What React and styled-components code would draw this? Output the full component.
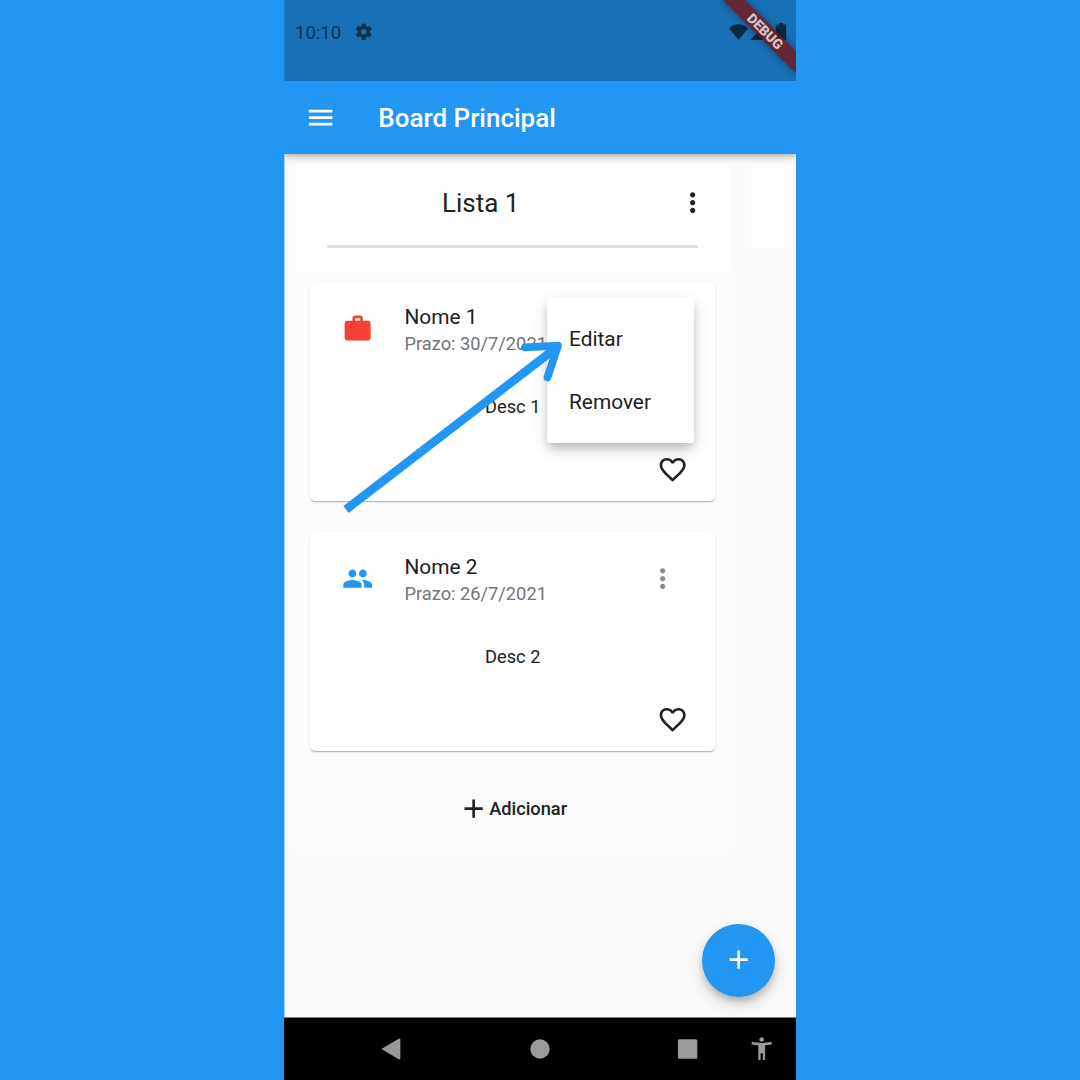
import React from "react";
import styled, { createGlobalStyle } from "styled-components";
import {
  MdMenu,
  MdWork,
  MdPeople,
  MdMoreVert,
  MdFavoriteBorder,
  MdAdd,
  MdAccessibilityNew,
} from "react-icons/md";

const blue = "#2196f3";
const ink = "#212121";

const GlobalStyle = createGlobalStyle`
  *, *::before, *::after { box-sizing: border-box; }
  body { margin: 0; background: ${blue}; font-family: Roboto, "Liberation Sans", sans-serif; }
  svg { display: block; flex: none; }
`;

const Stage = styled.div`
  width: 1080px;
  height: 1080px;
  padding-left: 284px;
  background: ${blue};
  overflow: hidden;
`;

const Phone = styled.div`
  position: relative;
  width: 512px;
  height: 1080px;
  display: flex;
  flex-direction: column;
  background: #fafafa;
  overflow: hidden;
  &::before {
    content: "";
    position: absolute;
    z-index: 9;
    inset: 0 auto 62px 0;
    width: 1px;
    background: rgba(33, 150, 243, 0.38);
  }
`;

const StatusBar = styled.header`
  position: relative;
  flex: none;
  height: 81px;
  padding: 22px 9px 0 11px;
  display: flex;
  justify-content: space-between;
  align-items: flex-start;
  background: #1a70b7;
  color: #0c3452;
  z-index: 2;
`;

const StatusGroup = styled.div`
  display: flex;
  align-items: center;
  gap: 13px;
  height: 20px;
`;

const Clock = styled.span`
  font-size: 18.5px;
  line-height: 22px;
  padding-top: 2px;
`;

const BannerClip = styled.div`
  position: absolute;
  inset: 0;
  overflow: hidden;
  z-index: 1;
`;

const DebugBanner = styled.div`
  position: absolute;
  left: 428.5px;
  top: 22.5px;
  width: 104px;
  height: 15.7px;
  padding-left: 1px;
  transform: rotate(45deg);
  background: rgba(117, 20, 23, 0.8);
  box-shadow: 0 0 8px rgba(0, 0, 0, 0.38);
  color: #cfc5c8;
  font-size: 13.8px;
  font-weight: 900;
  line-height: 16px;
  text-align: center;
`;

const AppBar = styled.div`
  position: relative;
  z-index: 1;
  flex: none;
  height: 73px;
  padding: 0 21px;
  display: flex;
  align-items: center;
  gap: 42px;
  background: ${blue};
  color: #fff;
  box-shadow: 0 2px 4px rgba(0, 0, 0, 0.2), 0 4px 9px rgba(0, 0, 0, 0.13);
`;

const Title = styled.h1`
  margin: 1px 0 0;
  font-size: 26px;
  font-weight: 500;
  line-height: 30px;
`;

const Board = styled.main`
  position: relative;
  flex: 1;
  display: flex;
  align-items: flex-start;
  gap: 21px;
  padding: 10px 0 0 11px;
`;

const List = styled.section`
  flex: none;
  width: 435px;
  height: 686px;
  background: #fcfcfc;
`;

const NextList = styled.section`
  flex: none;
  width: 45px;
  height: 84px;
  background: #fdfdfd;
`;

const ListHeader = styled.div`
  height: 102px;
  padding: 18px 32px 0;
  background: #fefefe;
`;

const ListTitleRow = styled.div`
  display: grid;
  grid-template-columns: 1fr 31px;
  align-items: center;
  height: 40px;
  margin-right: -9.5px;
  padding-top: 1px;
`;

const ListTitle = styled.h2`
  margin: 0;
  padding-right: 42px;
  text-align: center;
  font-size: 26px;
  font-weight: 400;
  line-height: 30px;
  color: ${ink};
`;

const Divider = styled.hr`
  height: 3px;
  margin: 23px 0 0;
  border: 0;
  background: #e0e0e0;
`;

const Cards = styled.div`
  display: flex;
  flex-direction: column;
  gap: 31px;
  padding: 16px 15px 0;
`;

const CardBox = styled.article`
  height: 219px;
  padding: 24px 27px 0 31.5px;
  border-radius: 5px;
  background: #fff;
  color: ${ink};
  box-shadow: 0 2px 1px -1px rgba(0, 0, 0, 0.16), 0 1px 1px rgba(0, 0, 0, 0.1),
    0 1px 3px rgba(0, 0, 0, 0.1);
`;

const CardHead = styled.div`
  display: grid;
  grid-template-columns: 63px 1fr 31px;
  align-items: center;
  height: 50px;
  padding-right: 10px;
`;

const CardIcon = styled.span`
  margin-top: -5px;
  color: ${(p) => p.$color};
`;

const CardMore = styled.span`
  margin-top: -4px;
  color: #8c8c8c;
`;

const CardLabels = styled.div`
  margin-top: -3px;
`;

const CardName = styled.div`
  font-size: 20.85px;
  line-height: 24px;
`;

const CardDue = styled.div`
  margin-top: 4px;
  font-size: 18.25px;
  line-height: 22px;
  color: #757575;
`;

const CardText = styled.p`
  margin: 40px 4px 0 0;
  text-align: center;
  font-size: 18.25px;
  line-height: 22px;
`;

const CardActions = styled.div`
  display: flex;
  justify-content: flex-end;
  margin-top: 36px;
`;

const AddButton = styled.button`
  display: flex;
  align-items: center;
  justify-content: center;
  width: 100%;
  height: 32px;
  margin: 41.5px 0 0;
  padding: 0;
  border: 0;
  background: none;
  color: ${ink};
  font: 500 18.25px/22px Roboto, sans-serif;
`;

const Menu = styled.div`
  position: absolute;
  z-index: 3;
  left: 263px;
  top: 143px;
  width: 147px;
  height: 146px;
  padding: 10px 0;
  border-radius: 3px;
  background: #fff;
  box-shadow: 0 6px 8px -2px rgba(0, 0, 0, 0.17), 0 6px 16px rgba(0, 0, 0, 0.16);
`;

const MenuItem = styled.div`
  display: flex;
  align-items: center;
  height: 63px;
  padding: 1px 22px 0;
  font-size: 20.85px;
  color: ${ink};
`;

const Fab = styled.button`
  position: absolute;
  z-index: 3;
  right: 21px;
  bottom: 20.5px;
  width: 73px;
  height: 73px;
  padding: 0;
  display: grid;
  place-items: center;
  border: 0;
  border-radius: 50%;
  background: ${blue};
  color: #fff;
  box-shadow: 0 5px 7px -1px rgba(0, 0, 0, 0.18), 0 7px 15px rgba(0, 0, 0, 0.17);
`;

const NavBar = styled.nav`
  position: relative;
  z-index: 4;
  flex: none;
  height: 63px;
  padding: 0 21px 0 97px;
  display: flex;
  align-items: center;
  border-top: 1px solid #7d7d7d;
  background: #000;
  color: #999;
`;

const NavKey = styled.span`
  margin-left: ${(p) => p.$before}px;
`;

const Pointer = styled.svg`
  position: absolute;
  z-index: 5;
  left: 50px;
  top: 330px;
  pointer-events: none;
`;

const items = [
  { name: "Nome 1", due: "Prazo: 30/7/2021", text: "Desc 1", Icon: MdWork, color: "#f44336", more: false },
  { name: "Nome 2", due: "Prazo: 26/7/2021", text: "Desc 2", Icon: MdPeople, color: blue, more: true },
];

function Gear() {
  return (
    <svg width="19.500" height="19.500" viewBox="0 0 24 24" fill="currentColor">
      <path d="M19.430 12.980c.04-.32.07-.64.07-.98s-.03-.66-.07-.98l2.110-1.650c.19-.15.24-.42.12-.64l-2-3.460c-.12-.22-.39-.3-.61-.22l-2.490 1c-.52-.4-1.080-.73-1.690-.98l-.38-2.650C14.460 2.180 14.250 2 14 2h-4c-.25 0-.46.18-.49.42l-.38 2.650c-.61.25-1.170.59-1.690.98l-2.490-1c-.23-.09-.49 0-.61.22l-2 3.460c-.13.22-.07.49.12.64l2.110 1.650c-.04.32-.07.65-.07.98s.03.66.07.98l-2.110 1.650c-.19.15-.24.42-.12.64l2 3.460c.12.22.39.3.61.22l2.490-1c.52.4 1.080.73 1.690.98l.38 2.650c.03.24.24.42.49.42h4c.25 0 .46-.18.49-.42l.38-2.650c.61-.25 1.170-.59 1.690-.98l2.490 1c.23.09.49 0 .61-.22l2-3.460c.12-.22.07-.49-.12-.64l-2.110-1.650zM12 15.500c-1.930 0-3.500-1.570-3.500-3.500s1.570-3.500 3.500-3.500 3.500 1.570 3.500 3.500-1.570 3.500-3.500 3.500z" />
    </svg>
  );
}

function Card({ name, due, text, Icon, color, more }) {
  return (
    <CardBox>
      <CardHead>
        <CardIcon $color={color}>
          <Icon size={31.3} />
        </CardIcon>
        <CardLabels>
          <CardName>{name}</CardName>
          <CardDue>{due}</CardDue>
        </CardLabels>
        {more && (
          <CardMore>
            <MdMoreVert size={31.3} />
          </CardMore>
        )}
      </CardHead>
      <CardText>{text}</CardText>
      <CardActions>
        <MdFavoriteBorder size={31.3} />
      </CardActions>
    </CardBox>
  );
}

export default function App() {
  return (
    <>
      <GlobalStyle />
      <Stage>
        <Phone>
          <StatusBar>
            <BannerClip>
              <DebugBanner>DEBUG</DebugBanner>
            </BannerClip>
            <StatusGroup>
              <Clock>10:10</Clock>
              <Gear />
            </StatusGroup>
            <svg width="58" height="20" viewBox="0 0 58 20" fill="#0a2a43">
              <path d="M0 6.2C5.4.8 13.8.8 19.2 6.2L9.6 18z" />
              <path d="M21 18L37 2v8h-3v8z" />
              <path d="M50 1h4v1.500h2.200c.6 0 1 .4 1 1V17c0 .6-.4 1-1 1h-8.400c-.6 0-1-.4-1-1V3.500c0-.6.4-1 1-1H50z" />
            </svg>
          </StatusBar>
          <AppBar>
            <MdMenu size={31.3} />
            <Title>Board Principal</Title>
          </AppBar>
          <Board>
            <List>
              <ListHeader>
                <ListTitleRow>
                  <ListTitle>Lista 1</ListTitle>
                  <MdMoreVert size={31.3} color={ink} />
                </ListTitleRow>
                <Divider />
              </ListHeader>
              <Cards>
                {items.map((item) => (
                  <Card key={item.name} {...item} />
                ))}
              </Cards>
              <AddButton>
                <MdAdd size={31.3} />
                Adicionar
              </AddButton>
            </List>
            <NextList />
            <Menu>
              <MenuItem>Editar</MenuItem>
              <MenuItem>Remover</MenuItem>
            </Menu>
            <Fab>
              <MdAdd size={31.3} />
            </Fab>
          </Board>
          <NavBar>
            <NavKey $before={0}>
              <svg width="20" height="22" viewBox="0 0 20 22" fill="currentColor">
                <path d="M18.200.6c.6-.3 1.100 0 1.100.6v19.600c0 .6-.5.900-1.100.6L1.200 11.600c-.5-.3-.5-.9 0-1.200z" />
              </svg>
            </NavKey>
            <NavKey $before={129}>
              <svg width="20" height="20" viewBox="0 0 20 20" fill="currentColor">
                <circle cx="10" cy="10" r="9.700" />
              </svg>
            </NavKey>
            <NavKey $before={127}>
              <svg width="21" height="20" viewBox="0 0 21 20" fill="currentColor">
                <rect x="0.900" y="0.300" width="19.400" height="19.400" rx="1.500" />
              </svg>
            </NavKey>
            <NavKey $before={49.5}>
              <MdAccessibilityNew size={27.4} />
            </NavKey>
          </NavBar>
          <Pointer width="240" height="190" viewBox="334 330 240 190" fill="none" stroke={blue}>
            <path d="M346 509.500L556 348" strokeWidth="8.600" />
            <path d="M525 347.300L558 345.600L547.500 377.200" strokeWidth="7.800" strokeLinecap="round" strokeLinejoin="round" />
          </Pointer>
        </Phone>
      </Stage>
    </>
  );
}
